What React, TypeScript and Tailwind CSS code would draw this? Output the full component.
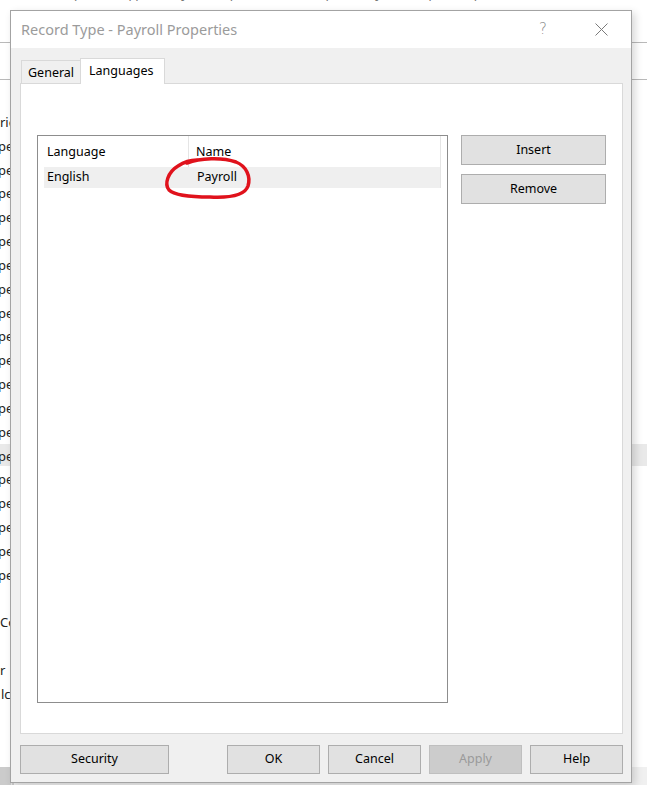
import React from "react";

const font = "font-['Noto_Sans','Open_Sans',sans-serif]";

function LeftFragments() {
  const rows: { text: string; ml: string }[] = [
    { text: "ries", ml: "ml-[0px]" },
    ...Array.from({ length: 19 }, () => ({ text: "pe", ml: "ml-[-2px]" })),
    { text: "", ml: "ml-0" },
    { text: "Co", ml: "ml-[0px]" },
    { text: "", ml: "ml-0" },
    { text: "r", ml: "ml-[0px]" },
    { text: "lc", ml: "ml-[1px]" },
  ];
  return (
    <div className="absolute left-0 top-[111px] flex flex-col text-[13px] leading-[23.83px] text-[#222] whitespace-nowrap">
      {rows.map((r, i) => (
        <div key={i} className={`h-[23.83px] ${r.ml}`}>
          {r.text}
        </div>
      ))}
    </div>
  );
}

function Btn({
  children,
  className = "",
  disabled = false,
}: {
  children: React.ReactNode;
  className?: string;
  disabled?: boolean;
}) {
  return (
    <div
      className={`flex items-center justify-center border text-[12.5px] ${
        disabled
          ? "bg-[#cccccc] border-[#bfbfbf] text-[#9a9a9a]"
          : "bg-[#e1e1e1] border-[#adadad] text-black"
      } ${className}`}
    >
      {children}
    </div>
  );
}

export default function App() {
  return (
    <div
      className={`relative w-[647px] h-[785px] overflow-hidden bg-white ${font} text-[12px] text-black`}
    >
      {/* underlying window (background) */}
      <div className="absolute inset-0">
        <div className="absolute left-[70px] top-[-16px] flex gap-[38px] text-[13px] text-[#777] whitespace-nowrap">
          <span>(p)</span>
          <span>q p</span>
          <span>y</span>
          <span>(p)</span>
          <span>(</span>
          <span>(p)</span>
          <span>y</span>
          <span>(q)</span>
          <span>p)</span>
        </div>
        <div className="absolute left-0 right-0 top-[42px] h-px bg-[#b9b9b9]" />
        <div className="absolute left-0 right-0 top-[79px] h-px bg-[#b9b9b9]" />
        <div className="absolute left-0 right-0 top-[444px] h-[22px] bg-[#e9e9e9]" />
        <div className="absolute left-0 right-0 top-[767px] h-[18px] bg-[#f0f0f0]">
          <div className="w-[14px] h-full bg-[#cbcbcb]" />
        </div>
        <div className="absolute left-0 top-[88px] h-[700px] w-[12px] border-r border-[#e3e3e3]" />
        <LeftFragments />
      </div>

      {/* dialog */}
      <div className="absolute left-[10px] top-[10px] w-[622px] h-[773px] border border-[#a3a3a3] bg-[#f0f0f0] shadow-[3px_3px_8px_rgba(0,0,0,0.16)] flex flex-col">
        {/* title bar */}
        <div className="h-[37px] shrink-0 bg-white flex items-center pl-[10px] text-[14.5px] text-[#9b9b9b]">
          <span>Record Type - Payroll Properties</span>
          <span className="ml-auto mr-[48px] text-[15px] text-[#8a8a8a] font-['DejaVu_Sans',sans-serif] font-light">?</span>
          <svg width="13" height="13" viewBox="0 0 13 13" className="mr-[23px]">
            <path d="M0.5 0.5 L12.5 12.5 M12.5 0.5 L0.5 12.5" stroke="#7a7a7a" strokeWidth="1" />
          </svg>
        </div>

        {/* body */}
        <div className="flex-1 flex flex-col pt-[10px] pl-[9px] pr-[8px] pb-[8px]">
          {/* tabs */}
          <div className="h-[25px] shrink-0 flex items-end pl-[1px] relative z-10">
            <div className="h-[23px] w-[60px] border border-b-0 border-[#d9d9d9] bg-[#f0f0f0] pl-[6px] pt-[2px] flex items-center text-[12.5px]">
              General
            </div>
            <div className="h-[26px] w-[85px] -ml-px -mb-px border border-b-0 border-[#d9d9d9] bg-white pl-[8px] flex items-center text-[12.5px] pb-[1px]">
              Languages
            </div>
          </div>

          {/* panel */}
          <div className="h-[651px] shrink-0 border border-[#d9d9d9] bg-white flex pl-[16px] pt-[51px] pr-[16px]">
            {/* list box */}
            <div className="w-[411px] h-[568px] border border-[#8d8d8d] px-[6px] flex flex-col">
              <div className="h-[31px] flex text-[12.5px]">
                <div className="w-[145px] border-r border-[#e5e5e5] pl-[3px] pt-[1px] flex items-center">Language</div>
                <div className="flex-1 border-r border-[#e5e5e5] pl-[7px] pt-[1px] flex items-center">Name</div>
              </div>
              <div className="h-[21px] flex bg-[#efefef] text-[12.5px]">
                <div className="w-[145px] pl-[3px] flex items-center">English</div>
                <div className="flex-1 pl-[8px] flex items-center border-r border-[#e5e5e5]">Payroll</div>
              </div>
            </div>
            {/* side buttons */}
            <div className="ml-[13px] w-[145px] flex flex-col gap-[9px]">
              <Btn className="h-[30px]">Insert</Btn>
              <Btn className="h-[30px]">Remove</Btn>
            </div>
          </div>

          {/* bottom buttons */}
          <div className="mt-[11px] h-[29px] flex">
            <Btn className="w-[149px] h-[29px]">Security</Btn>
            <div className="ml-auto flex gap-[8px]">
              <Btn className="w-[93px] h-[29px]">OK</Btn>
              <Btn className="w-[93px] h-[29px]">Cancel</Btn>
              <Btn className="w-[93px] h-[29px]" disabled>
                Apply
              </Btn>
              <Btn className="w-[93px] h-[29px]">Help</Btn>
            </div>
          </div>
        </div>
      </div>

      {/* red annotation */}
      <svg className="absolute left-0 top-0 pointer-events-none" width="647" height="785" viewBox="0 0 647 785">
        <path
          d="M187 163 C 200 158, 222 157, 236 162 C 246 166, 251 176, 248 186 C 245 195, 230 198, 210 197 C 192 197, 175 196, 169 190 C 164 184, 168 172, 178 166 C 184 162, 192 160, 197 160"
          fill="none"
          stroke="#e0121c"
          strokeWidth="3.5"
          strokeLinecap="round"
          strokeLinejoin="round"
        />
      </svg>
    </div>
  );
}
